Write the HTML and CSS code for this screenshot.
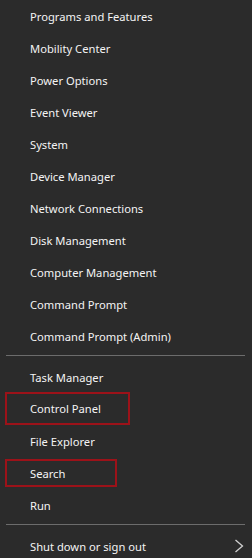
FILE: index.html
```html
<!DOCTYPE html>
<html lang="en">
<head>
    <meta charset="UTF-8">
    <meta name="viewport" content="width=device-width, initial-scale=1.0">
    <title>Quick Link Menu</title>
    <link rel="stylesheet" href="styles.css">
</head>
<body>

    <!-- Win+X quick link menu -->
    <ul class="menu">
        <li class="menu-item"><span class="label">Programs and Features</span></li>
        <li class="menu-item"><span class="label">Mobility Center</span></li>
        <li class="menu-item"><span class="label">Power Options</span></li>
        <li class="menu-item"><span class="label">Event Viewer</span></li>
        <li class="menu-item"><span class="label">System</span></li>
        <li class="menu-item"><span class="label">Device Manager</span></li>
        <li class="menu-item"><span class="label">Network Connections</span></li>
        <li class="menu-item"><span class="label">Disk Management</span></li>
        <li class="menu-item"><span class="label">Computer Management</span></li>
        <li class="menu-item"><span class="label">Command Prompt</span></li>
        <li class="menu-item"><span class="label">Command Prompt (Admin)</span></li>

        <li class="separator"></li>

        <li class="menu-item"><span class="label">Task Manager</span></li>
        <li class="menu-item marked marked-wide"><span class="label">Control Panel</span></li>
        <li class="menu-item"><span class="label">File Explorer</span></li>
        <li class="menu-item marked marked-narrow"><span class="label">Search</span></li>
        <li class="menu-item"><span class="label">Run</span></li>

        <li class="separator"></li>

        <li class="menu-item has-sub">
            <span class="label">Shut down or sign out</span>
            <svg class="chevron" width="10" height="14" viewBox="0 0 10 14">
                <polyline points="1.5,1 8.5,7 1.5,13" fill="none" stroke="#d0d0d0" stroke-width="1.3"/>
            </svg>
        </li>
    </ul>

</body>
</html>
```

FILE: styles.css
```css
/* Page */
body {
    margin: 0;
    background-color: #2b2b2b;
    font-family: "Noto Sans", "Open Sans", sans-serif;
    font-size: 11.2px;
    color: #f4f4f4;
}

/* Menu list */
.menu {
    list-style: none;
    margin: 0;
    padding: 0;
    width: 252px;
}

/* One row of the menu */
.menu-item {
    height: 32px;
    display: flex;
    align-items: center;
    padding-left: 30px;
    box-sizing: border-box;
}

/* Rows marked with a red box */
.menu-item.marked {
    margin-left: 5px;
    padding-left: 23px;
    border: 2px solid #9c1219;
}

.marked-wide {
    width: 125px;
    height: 33px;
    margin-top: -1px;
}

.marked-narrow {
    width: 112px;
    height: 28px;
    margin: 2px 0;
}

/* Thin divider line between groups */
.separator {
    height: 1px;
    margin: 3px 7px 5px 6px;
    background-color: #6c6c6c;
}

/* Row with a submenu arrow */
.has-sub {
    justify-content: space-between;
    padding-right: 8px;
}

.chevron {
    display: block;
}
```
